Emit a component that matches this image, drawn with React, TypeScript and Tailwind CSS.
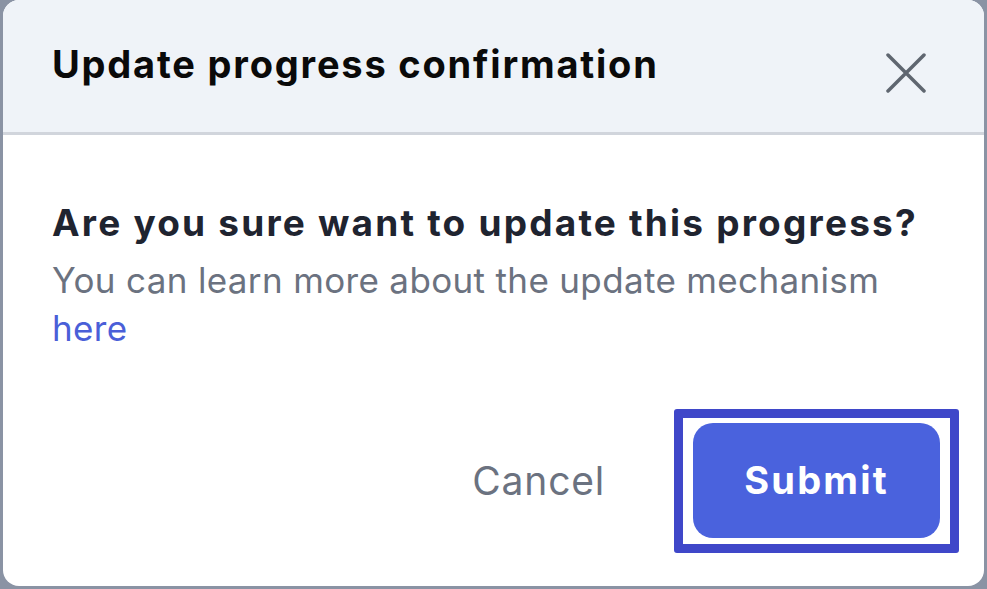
import React from "react";

export default function App() {
  return (
    <div
      className="w-[987px] h-[589px] bg-[#8a93a4] overflow-hidden"
      style={{ fontFamily: "Inter, 'Noto Sans', sans-serif" }}
    >
      <div className="ml-[3px] w-[981px] h-[586px] bg-white rounded-[16px] overflow-hidden flex flex-col">
        <div className="h-[135px] shrink-0 bg-[#eff3f8] border-b-[3px] border-[#d1d5dc] flex items-center justify-between pl-[49px] pr-[58px]">
          <h1 className="text-[38px] font-bold text-[#0a0a0a] tracking-[1.8px] pb-[4px] whitespace-nowrap">
            Update progress confirmation
          </h1>
          <svg width="40" height="40" viewBox="0 0 40 40" className="mt-[14px] shrink-0">
            <path
              d="M2 2 L38 38 M38 2 L2 38"
              stroke="#5f6670"
              strokeWidth="3.5"
              strokeLinecap="round"
            />
          </svg>
        </div>
        <div className="pl-[49px] pt-[64px]">
          <p className="text-[37px] font-bold text-[#1f2430] leading-[48px] tracking-[2.2px] whitespace-nowrap">
            Are you sure want to update this progress?
          </p>
          <p className="text-[35px] text-[#6b7280] leading-[48px] mt-[9px] tracking-[0.35px] whitespace-nowrap">
            You can learn more about the update mechanism
            <br />
            <span className="text-[#4a5fd8]">here</span>
          </p>
        </div>
        <div className="flex-1 flex items-start justify-end pr-[25px] pt-[57px] gap-[69px]">
          <span className="text-[39px] text-[#6b7280] mt-[43px] tracking-[0.8px]">Cancel</span>
          <div className="border-[9px] border-[#3f47c9] rounded-[3px] bg-white pl-[10px] pr-[10px] pt-[5px] pb-[6px]">
            <button className="w-[247px] h-[115px] rounded-[20px] bg-[#4a62dd] text-white text-[38px] font-bold tracking-[2.2px] flex items-center justify-center">
              Submit
            </button>
          </div>
        </div>
      </div>
    </div>
  );
}
